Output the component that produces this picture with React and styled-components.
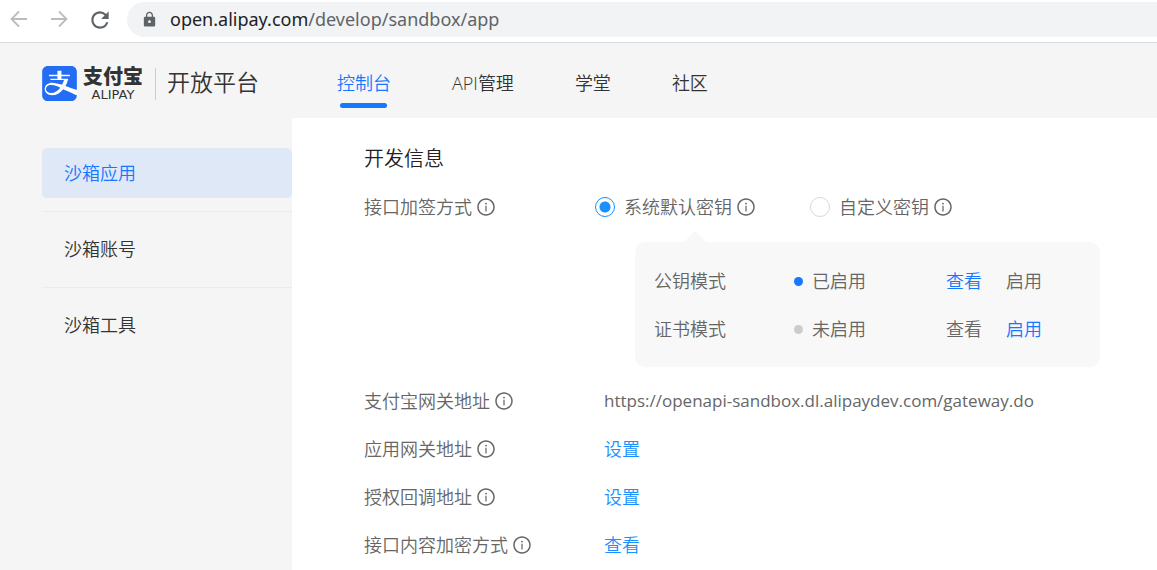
import React, { useState } from "react";
// Styled-Component
import styled, { createGlobalStyle } from "styled-components";
// Icon
import { SiAlipay } from "react-icons/si";
import { MdRefresh, MdLock } from "react-icons/md";
import { AiOutlineInfoCircle } from "react-icons/ai";

// Var : top navigation
const navItems = ["控制台", "API管理", "学堂", "社区"];

// Var : side menu
const menuItems = ["沙箱应用", "沙箱账号", "沙箱工具"];

// Var : key modes inside of the panel
const modes = [
  { name: "公钥模式", status: "已启用", enabled: true },
  { name: "证书模式", status: "未启用", enabled: false },
];

// Var : settings below of the panel
const settings = [
  { label: "支付宝网关地址", text: "https://openapi-sandbox.dl.alipaydev.com/gateway.do" },
  { label: "应用网关地址", action: "设置" },
  { label: "授权回调地址", action: "设置" },
  { label: "接口内容加密方式", action: "查看" },
];

const ArrowIcon = ({ d }) => {
  return (
    <svg width="24" height="24" viewBox="0 0 24 24" fill="none" stroke="currentColor" strokeWidth="1.8">
      <path d={d} />
    </svg>
  );
};

const AddressBar = () => {
  return (
    <StyToolbar>
      <ToolButton type="button" aria-label="后退" $muted>
        <ArrowIcon d="M20 11H5M12 3.5L4.5 11L12 18.5" />
      </ToolButton>
      <ToolButton type="button" aria-label="前进" $muted>
        <ArrowIcon d="M4 11H19M12 3.5L19.5 11L12 18.5" />
      </ToolButton>
      <ToolButton type="button" aria-label="刷新">
        <MdRefresh />
      </ToolButton>
      <Omnibox>
        <MdLock />
        <Url>
          <b>open.alipay.com</b>/develop/sandbox/app
        </Url>
      </Omnibox>
    </StyToolbar>
  );
};

const Header = () => {
  return (
    <StyHeader>
      <Brand href="#">
        <LogoMark>
          <SiAlipay />
        </LogoMark>
        <Wordmark>
          <span className="Cn">支付宝</span>
          <span className="En">ALIPAY</span>
        </Wordmark>
        <Platform>开放平台</Platform>
      </Brand>
      <Nav>
        {navItems.map((item, i) => (
          <NavLink href="#" key={item} $active={i === 0}>
            {item}
          </NavLink>
        ))}
      </Nav>
    </StyHeader>
  );
};

const ModePanel = () => {
  return (
    <StyPanel>
      {modes.map((mode) => (
        <ModeRow key={mode.name}>
          <span>{mode.name}</span>
          <Status $on={mode.enabled}>{mode.status}</Status>
          <TextButton type="button" $color={mode.enabled ? "#1677ff" : "#666"}>
            查看
          </TextButton>
          <TextButton type="button" $color={mode.enabled ? "#666" : "#1677ff"}>
            启用
          </TextButton>
        </ModeRow>
      ))}
    </StyPanel>
  );
};

const App = () => {
  // Hook : which signing key is selected
  const [keyType, setKeyType] = useState("default");

  return (
    <>
      <GlobalStyle />
      <AddressBar />
      <Header />
      <Body>
        <Side>
          {menuItems.map((item, i) => (
            <SideItem key={item}>
              <SideLink href="#" $active={i === 0}>
                {item}
              </SideLink>
            </SideItem>
          ))}
        </Side>
        <Main>
          <Title>开发信息</Title>
          <Row>
            <Label>
              接口加签方式
              <AiOutlineInfoCircle />
            </Label>
            <Choices>
              <Choice>
                <Radio
                  name="key"
                  checked={keyType === "default"}
                  onChange={() => setKeyType("default")}
                />
                系统默认密钥
                <AiOutlineInfoCircle />
              </Choice>
              <Choice>
                <Radio
                  name="key"
                  checked={keyType === "custom"}
                  onChange={() => setKeyType("custom")}
                />
                自定义密钥
                <AiOutlineInfoCircle />
              </Choice>
            </Choices>
          </Row>
          <ModePanel />
          {settings.map((item) => (
            <Row key={item.label}>
              <Label>
                {item.label}
                <AiOutlineInfoCircle />
              </Label>
              {item.action ? (
                <TextButton type="button" $color="#1890ff">
                  {item.action}
                </TextButton>
              ) : (
                <Gateway>{item.text}</Gateway>
              )}
            </Row>
          ))}
        </Main>
      </Body>
    </>
  );
};

export default App;

const GlobalStyle = createGlobalStyle`
  * {
    box-sizing: border-box;
  }

  html,
  body,
  #root {
    height: 100%;
  }

  body {
    margin: 0;
    background-color: #f5f5f5;
    color: #666;
    font-family: "Open Sans", "Noto Sans CJK SC", sans-serif;
    font-size: 18px;
    font-weight: 350;
    line-height: 24px;
    overflow: hidden;
  }

  #root {
    display: flex;
    flex-direction: column;
  }

  a {
    color: inherit;
    text-decoration: none;
  }

  button {
    padding: 0;
    border: 0;
    background: none;
    font: inherit;
    cursor: pointer;
  }
`;

const StyToolbar = styled.div`
  display: flex;
  align-items: center;
  gap: 16px;
  flex: none;
  padding: 2px 0 5px 7px;
  border-bottom: 1px solid #dadce0;
  background-color: #fff;
`;

const ToolButton = styled.button`
  display: flex;
  flex: none;
  color: ${(props) => (props.$muted ? "#babcbe" : "#5f6368")};
  font-size: 26px;
`;

const Omnibox = styled.div`
  display: flex;
  flex: 1;
  align-items: center;
  gap: 12px;
  height: 35px;
  margin-left: -2px;
  padding-left: 14px;
  border-radius: 18px 0 0 18px;
  background-color: #f1f3f4;
  color: #5f6368;
  font-size: 17px;
`;

const Url = styled.span`
  padding-bottom: 2px;
  font-family: "Noto Sans", sans-serif;
  font-size: 18px;
  font-weight: 400;

  b {
    color: #202124;
    font-weight: 400;
  }
`;

const StyHeader = styled.header`
  display: flex;
  align-items: center;
  gap: 78px;
  flex: none;
  height: 75px;
  padding: 6px 42px 0;
`;

const Brand = styled.a`
  display: flex;
  align-items: center;
`;

const LogoMark = styled.span`
  display: flex;
  margin-right: 6px;
  border-radius: 6px;
  background-color: #fff;
  color: #226df3;
  font-size: 35px;
`;

const Wordmark = styled.span`
  display: flex;
  flex-direction: column;
  align-items: center;
  color: #333;

  .Cn {
    font-size: 20px;
    font-weight: 900;
    line-height: 23px;
  }

  .En {
    font-family: "DejaVu Sans", sans-serif;
    font-size: 13px;
    font-weight: 400;
    line-height: 14px;
  }
`;

const Platform = styled.span`
  margin-left: 12px;
  padding: 0 0 4px 11px;
  border-left: 1px solid #ccc;
  color: #333;
  font-size: 23px;
  line-height: 28px;
`;

const Nav = styled.nav`
  display: flex;
  gap: 61px;
  padding-bottom: 2px;
`;

const NavLink = styled.a`
  position: relative;
  color: ${(props) => (props.$active ? "#1677ff" : "#333")};

  &::after {
    content: "";
    display: ${(props) => (props.$active ? "block" : "none")};
    position: absolute;
    left: 3px;
    right: 4px;
    bottom: -13px;
    height: 5px;
    border-radius: 3px;
    background-color: #1677ff;
  }
`;

const Body = styled.div`
  display: flex;
  flex: 1;
`;

const Side = styled.ul`
  flex: none;
  width: 292px;
  margin: 0;
  padding: 30px 0 0 42px;
  list-style: none;
`;

const SideItem = styled.li`
  & + & {
    margin-top: 13px;
    padding-top: 12px;
    border-top: 1px solid #ebebeb;
  }
`;

const SideLink = styled.a`
  display: block;
  padding: 13px 22px;
  border-radius: 5px;
  background-color: ${(props) => (props.$active ? "#dfe8f7" : "transparent")};
  color: ${(props) => (props.$active ? "#1677ff" : "#333")};
`;

const Main = styled.main`
  flex: 1;
  padding: 29px 57px 0 72px;
  background-color: #fff;
`;

const Title = styled.h2`
  margin: 0 0 24px;
  color: #222;
  font-size: 20px;
  font-weight: 350;
`;

const Row = styled.div`
  display: grid;
  grid-template-columns: 240px 1fr;
  align-items: center;
  justify-items: start;
  margin-bottom: 24px;
`;

const Label = styled.span`
  display: flex;
  align-items: center;
  gap: 4px;

  svg {
    font-size: 20px;
  }
`;

const Choices = styled.div`
  display: flex;
  gap: 54px;
  margin-left: -9px;
`;

const Choice = styled.label`
  display: flex;
  align-items: center;
  cursor: pointer;

  svg {
    margin-left: 4px;
    font-size: 20px;
  }
`;

const Radio = styled.input.attrs({ type: "radio" })`
  appearance: none;
  width: 20px;
  height: 20px;
  margin: 0 9px 0 0;
  border: 1px solid #d9d9d9;
  border-radius: 50%;
  background-color: #fff;

  &:checked {
    border-color: #1890ff;
    background: radial-gradient(circle, #1890ff 5px, #fff 6px);
  }
`;

const Gateway = styled.span`
  font-size: 17px;
  font-weight: 400;
`;

const StyPanel = styled.div`
  position: relative;
  display: flex;
  flex-direction: column;
  gap: 24px;
  max-width: 465px;
  margin: -1px 0 22px 271px;
  padding: 27px 19px 26px;
  border-radius: 10px;
  background-color: #f8f8f8;

  &::before {
    content: "";
    position: absolute;
    top: -11px;
    left: 48px;
    border: 12px solid transparent;
    border-top: 0;
    border-bottom-color: #f8f8f8;
  }
`;

const ModeRow = styled.div`
  display: grid;
  grid-template-columns: 140px 152px 60px 60px;
  justify-items: start;
`;

const Status = styled.span`
  display: flex;
  align-items: center;
  gap: 9px;

  &::before {
    content: "";
    width: 9px;
    height: 9px;
    border-radius: 50%;
    background-color: ${(props) => (props.$on ? "#1677ff" : "#ccc")};
  }
`;

const TextButton = styled.button`
  && {
    color: ${(props) => props.$color};
  }
`;
